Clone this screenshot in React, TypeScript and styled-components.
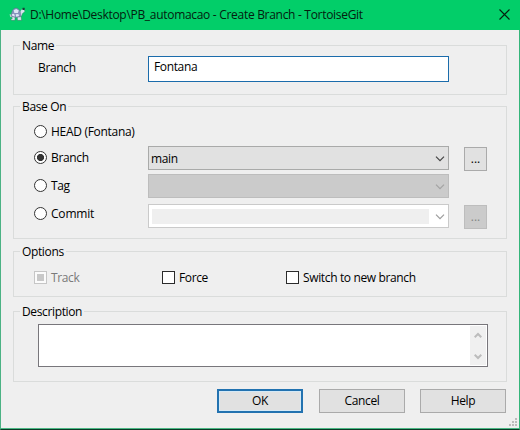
import React from "react";
import styled, { createGlobalStyle } from "styled-components";

const GlobalStyle = createGlobalStyle`
  * { box-sizing: border-box; }
  html, body { margin: 0; padding: 0; }
  body { width: 520px; height: 430px; overflow: hidden; background: #efefef; }
`;

const Dialog = styled.div`
  position: relative;
  width: 520px;
  height: 430px;
  display: flex;
  flex-direction: column;
  background: #efefef;
  border-left: 1px solid #4bb284;
  border-right: 1px solid #35b57a;
  border-bottom: 1px solid #0b3a26;
  box-shadow: inset 0 -1px 0 #4bb885;
  font-family: "Open Sans", "Noto Sans", sans-serif;
  font-size: 12px;
  line-height: 16px;
  color: #000;
`;

const TitleBar = styled.header`
  flex: none;
  display: flex;
  align-items: flex-start;
  height: 30px;
  margin: 0 -1px;
  padding: 7px 9px 0 9px;
  background: #02ce69;
`;

const Text = styled.span<{ $track?: number; $muted?: boolean }>`
  white-space: nowrap;
  letter-spacing: ${(p) => p.$track ?? -0.36}px;
  color: ${(p) => (p.$muted ? "#7a7a7a" : "inherit")};
`;

const Title = styled(Text)`
  margin-left: 5px;
  flex: 1;
  color: #04200f;
`;

const TurtleIcon = styled.svg`
  flex: none;
`;

const CloseIcon = styled.svg`
  margin: 2px 1px 0 0;
`;

const Content = styled.main`
  display: flex;
  flex-direction: column;
  padding: 15px 12px 0;
`;

const Group = styled.section<{ $height: number; $gap?: number }>`
  height: ${(p) => p.$height}px;
  margin-bottom: ${(p) => p.$gap ?? 0}px;
  border: 1px solid #dadcdb;
`;

const Legend = styled.h2`
  width: max-content;
  height: 16px;
  margin: -9px 0 0 6px;
  padding: 1px 2px 0;
  font: inherit;
  background: #efefef;
`;

const Row = styled.div<{ $left: number; $top?: number; $height: number }>`
  display: flex;
  align-items: flex-start;
  height: ${(p) => p.$height}px;
  margin-top: ${(p) => p.$top ?? 0}px;
  padding-left: ${(p) => p.$left}px;
`;

const NameLabel = styled.div`
  width: 110px;
  padding-top: 4px;
`;

const NameField = styled.div`
  width: 301px;
  height: 26px;
  padding: 2px 5px;
  border: 1px solid #1b6cab;
  background: #fff;
`;

const Choice = styled.label<{ $width: number; $top?: number }>`
  display: flex;
  gap: 4px;
  width: ${(p) => p.$width}px;
  padding-top: ${(p) => p.$top ?? 0}px;
`;

const RadioMark = styled.span<{ $on?: boolean }>`
  flex: none;
  width: 13px;
  height: 13px;
  margin-top: 1px;
  border: 1px solid #333;
  border-radius: 50%;
  background: ${(p) => (p.$on ? "radial-gradient(circle, #333 3.2px, #fff 3.9px)" : "#fff")};
`;

const CheckMark = styled.span<{ $mixed?: boolean }>`
  flex: none;
  width: 13px;
  height: 13px;
  margin-top: 1px;
  padding: 2px;
  border: 1px solid ${(p) => (p.$mixed ? "#c6c6c6" : "#2b2b2b")};
  background: ${(p) => (p.$mixed ? "#c8c8c8" : "#fff")};
  background-clip: ${(p) => (p.$mixed ? "content-box" : "border-box")};
  box-shadow: ${(p) => (p.$mixed ? "inset 0 0 0 2px #fbfbfb" : "none")};
`;

type Tone = "normal" | "disabled" | "editable";
const fills = { normal: "#e1e1e1", disabled: "#cbcbcb", editable: "#fff" };
const edges = { normal: "#a9aaa9", disabled: "#bdbdbd", editable: "#cacaca" };
const arrows = { normal: "#454545", disabled: "#a3a3a3", editable: "#9c9c9c" };

const Combo = styled.div<{ $tone: Tone }>`
  display: flex;
  align-items: center;
  justify-content: space-between;
  width: 301px;
  height: 24px;
  padding: 0 3px 0 3px;
  border: 1px solid ${(p) => edges[p.$tone]};
  background: ${(p) => fills[p.$tone]};
`;

const ComboText = styled.div`
  flex: 1;
  height: 18px;
  margin-left: -1px;
  padding-top: 2px;
`;

const ComboArrow = styled.svg`
  flex: none;
  margin-top: 2px;
`;

const DisabledEdit = styled.div`
  width: 277px;
  height: 15px;
  background: #efefef;
`;

const PushButton = styled.button<{ $kind?: "default" | "disabled"; $small?: boolean }>`
  flex: none;
  width: ${(p) => (p.$small ? 23 : 86)}px;
  height: 24px;
  margin: ${(p) => (p.$small ? "1px 0 0 15px" : 0)};
  padding: 0;
  border: ${(p) => (p.$kind === "default" ? "2px solid #2272b0" : p.$kind === "disabled" ? "1px solid #bdbdbd" : "1px solid #aaa")};
  background: ${(p) => (p.$kind === "disabled" ? "#cbcbcb" : "#e1e1e1")};
  color: ${(p) => (p.$kind === "disabled" ? "#858585" : "#000")};
  box-shadow: ${(p) => (p.$kind === "default" ? "inset 0 0 0 1px #d5e9f6" : "none")};
  font: inherit;
  line-height: 16px;
`;

const Memo = styled.div`
  display: flex;
  justify-content: flex-end;
  width: 450px;
  height: 43px;
  padding: 1px;
  border: 1px solid #78767b;
  background: #fff;
`;

const ScrollTrack = styled.div`
  display: flex;
  flex-direction: column;
  justify-content: space-between;
  align-items: center;
  width: 16px;
  height: 39px;
  padding: 6px 0 5px;
  background: #f0f0f0;
`;

const Footer = styled.footer`
  display: flex;
  justify-content: flex-end;
  gap: 15px;
  margin: 7px 1px 0 0;
`;

const OkCell = styled.div`
  margin-right: 1px;
`;

const Grip = styled.svg`
  position: absolute;
  right: 2px;
  bottom: 3px;
`;

const Arrow = ({ tone }: { tone: Tone }) => (
  <ComboArrow width="10" height="6" viewBox="0 0 10 6">
    <path d="M1 0.7 L5 4.7 L9 0.7" fill="none" stroke={arrows[tone]} strokeWidth="1.2" />
  </ComboArrow>
);

const ScrollArrow = ({ up }: { up?: boolean }) => (
  <svg width="8" height="7" viewBox="0 0 8 7">
    <path d={up ? "M0.7 5.3 L4 2 L7.3 5.3" : "M0.7 1.7 L4 5 L7.3 1.7"} fill="none" stroke="#bcbcbc" strokeWidth="2" />
  </svg>
);

const Turtle = () => (
  <TurtleIcon width="16" height="14" viewBox="0.3 1.5 14.9 12.6" preserveAspectRatio="none">
    <path d="M0.8 8 L4 8.4 L4.5 11 L1.5 10.5Z" fill="#b9d3d3" />
    <path d="M3 10 L6 10.5 L5.8 13.5 L2.5 13.5 L2 12.3 L3.3 12Z M8 10.5 L11.5 10 L12 13.5 L8.2 13.5Z" fill="#d7e7ee" stroke="#42675f" strokeWidth=".4" />
    <path d="M10 7 L11 4.8 L12.3 3.6 L14.5 3.6 L15 5.8 L13 7.2 L12 9.7 L10 10.5Z" fill="#d5e6ee" stroke="#3e6d68" strokeWidth=".3" />
    <path d="M2.5 9.7 Q2.4 3 6.8 2.3 Q11.2 3 11.5 9.7 Q7 12 2.5 9.7Z" fill="#8492bb" stroke="#65728f" strokeWidth=".4" />
    <path d="M4.7 4.5 L7 3.3 L9.4 4.7 L8.5 6.9 L5.3 6.9Z M3 8 L5 7.6 L5.9 10 L3.5 9.7Z M6.5 8.1 L9 7.7 L9.7 9.7 L7 10.3Z" fill="#dce6f4" />
    <path d="M12.9 2.2h2v2h-2Z" fill="#193d35" />
  </TurtleIcon>
);

export default function App() {
  return (
    <>
      <GlobalStyle />
      <Dialog>
        <TitleBar>
          <Turtle />
          <Title $track={-0.3}>D:\Home\Desktop\PB_automacao - Create Branch - TortoiseGit</Title>
          <CloseIcon width="11" height="11" viewBox="0 0 11 11">
            <path d="M0.5 0.5 L10.5 10.5 M10.5 0.5 L0.5 10.5" stroke="#05200f" strokeWidth="1.1" />
          </CloseIcon>
        </TitleBar>
        <Content>
          <Group $height={50} $gap={11}>
            <Legend><Text>Name</Text></Legend>
            <Row $left={24} $top={3} $height={26}>
              <NameLabel><Text>Branch</Text></NameLabel>
              <NameField><Text>Fontana</Text></NameField>
            </Row>
          </Group>
          <Group $height={133} $gap={12}>
            <Legend><Text>Base On</Text></Legend>
            <Row $left={20} $top={10} $height={22}>
              <Choice $width={114}><RadioMark /><Text $track={-0.3}>HEAD (Fontana)</Text></Choice>
            </Row>
            <Row $left={20} $height={28}>
              <Choice $width={114} $top={4}><RadioMark $on /><Text>Branch</Text></Choice>
              <Combo $tone="normal"><ComboText><Text>main</Text></ComboText><Arrow tone="normal" /></Combo>
              <PushButton $small>...</PushButton>
            </Row>
            <Row $left={20} $height={30}>
              <Choice $width={114} $top={4}><RadioMark /><Text>Tag</Text></Choice>
              <Combo $tone="disabled"><ComboText /><Arrow tone="disabled" /></Combo>
            </Row>
            <Row $left={20} $height={25}>
              <Choice $width={114} $top={2}><RadioMark /><Text $track={-0.2}>Commit</Text></Choice>
              <Combo $tone="editable"><DisabledEdit /><Arrow tone="editable" /></Combo>
              <PushButton $small $kind="disabled" disabled>...</PushButton>
            </Row>
          </Group>
          <Group $height={46} $gap={14}>
            <Legend><Text>Options</Text></Legend>
            <Row $left={20} $top={11} $height={16}>
              <Choice $width={128}><CheckMark $mixed /><Text $muted>Track</Text></Choice>
              <Choice $width={124}><CheckMark /><Text>Force</Text></Choice>
              <Choice $width={140}><CheckMark /><Text>Switch to new branch</Text></Choice>
            </Row>
          </Group>
          <Group $height={71}>
            <Legend><Text>Description</Text></Legend>
            <Row $left={24} $top={5} $height={43}>
              <Memo><ScrollTrack><ScrollArrow up /><ScrollArrow /></ScrollTrack></Memo>
            </Row>
          </Group>
          <Footer>
            <OkCell><PushButton $kind="default"><Text>OK</Text></PushButton></OkCell>
            <PushButton><Text>Cancel</Text></PushButton>
            <PushButton><Text>Help</Text></PushButton>
          </Footer>
        </Content>
        <Grip width="8" height="8" viewBox="0 0 8 8">
          <path d="M6 0h2v2h-2z M3 3h2v2h-2z M6 3h2v2h-2z M0 6h2v2h-2z M3 6h2v2h-2z M6 6h2v2h-2z" fill="#bcbcbc" />
        </Grip>
      </Dialog>
    </>
  );
}
